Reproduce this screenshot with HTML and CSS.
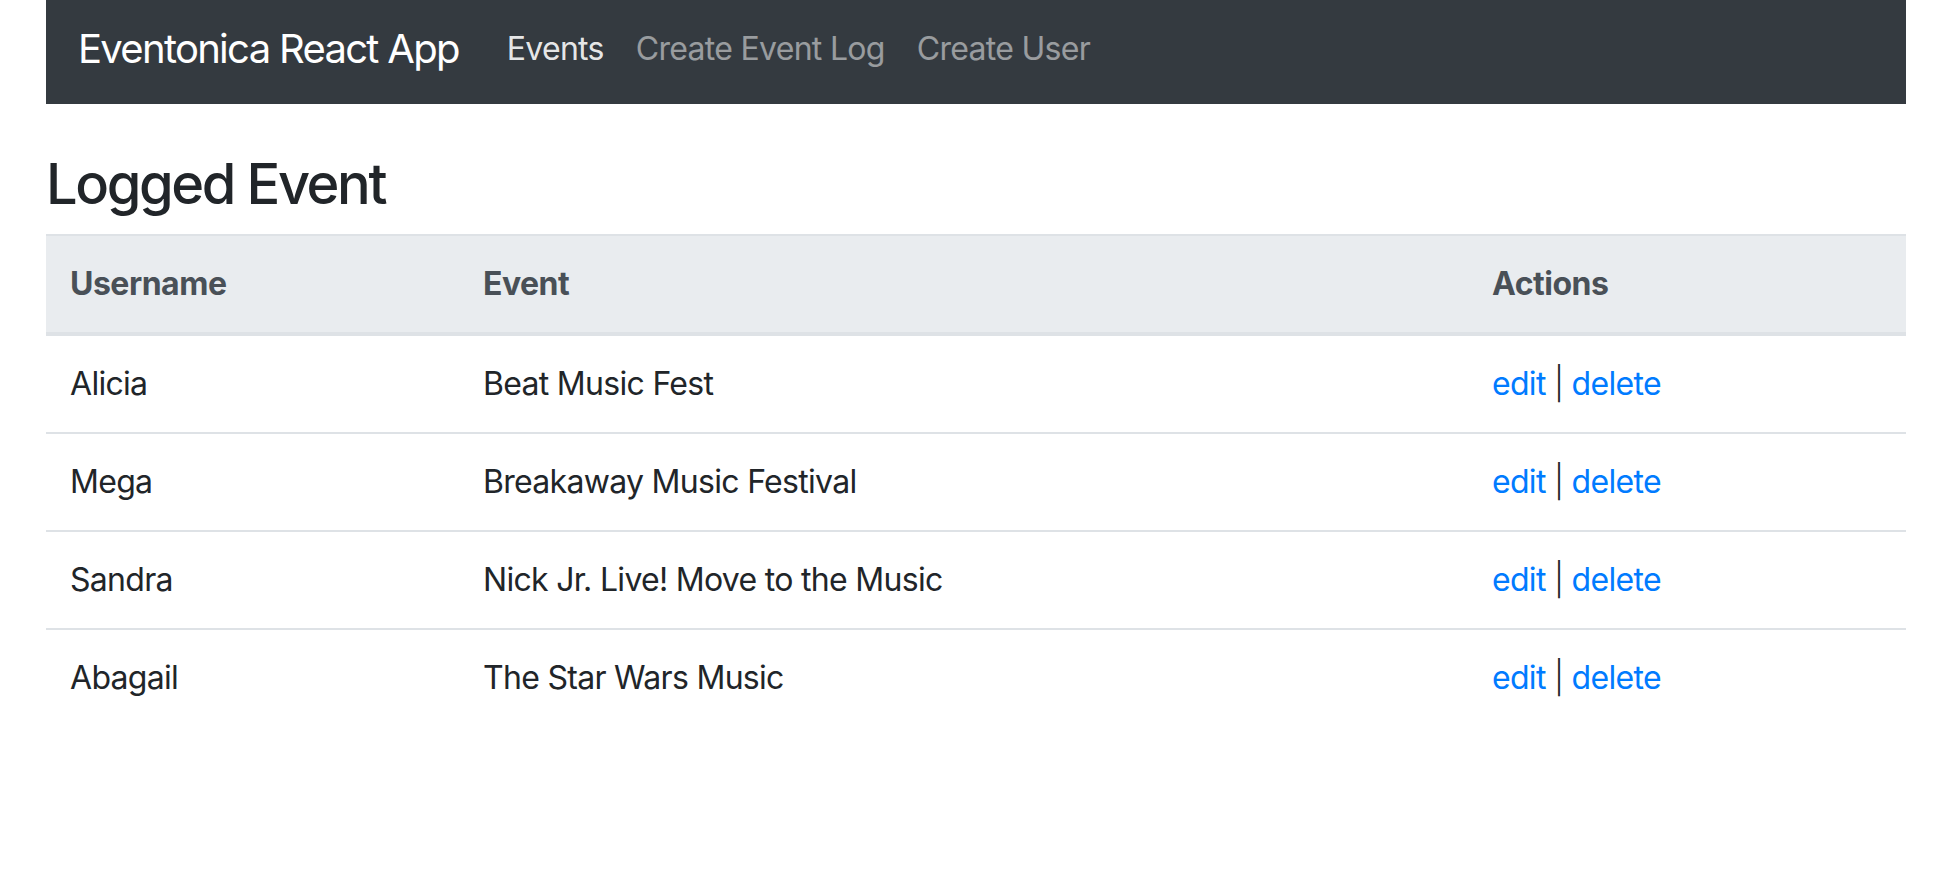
FILE: index.html
```html
<!DOCTYPE html>
<html>
<head>
<meta charset="utf-8">
<link rel="stylesheet" href="styles.css">
</head>
<body>
<div class="page">
  <nav class="navbar">
    <a class="brand">Eventonica React App</a>
    <ul class="nav">
      <li><a class="nav-link active">Events</a></li>
      <li><a class="nav-link">Create Event Log</a></li>
      <li><a class="nav-link">Create User</a></li>
    </ul>
  </nav>
  <h3 class="title">Logged Event</h3>
  <table class="table">
    <thead>
      <tr><th class="c1">Username</th><th class="c2">Event</th><th class="c3">Actions</th></tr>
    </thead>
    <tbody>
      <tr><td>Alicia</td><td>Beat Music Fest</td><td><a class="link">edit</a> <span class="sep">|</span> <a class="link">delete</a></td></tr>
      <tr><td>Mega</td><td>Breakaway Music Festival</td><td><a class="link">edit</a> <span class="sep">|</span> <a class="link">delete</a></td></tr>
      <tr><td>Sandra</td><td>Nick Jr. Live! Move to the Music</td><td><a class="link">edit</a> <span class="sep">|</span> <a class="link">delete</a></td></tr>
      <tr><td>Abagail</td><td>The Star Wars Music</td><td><a class="link">edit</a> <span class="sep">|</span> <a class="link">delete</a></td></tr>
    </tbody>
  </table>
</div>
</body>
</html>
```
FILE: styles.css
```css
html, body { margin: 0; padding: 0; background: #fff; }
body {
  font-family: Inter, "Noto Sans", "Liberation Sans", sans-serif;
  color: #212529;
  font-size: 32px;
  line-height: 1.5;
}
.page { margin: 0 50px 0 46px; }
.navbar {
  display: flex;
  align-items: center;
  height: 104px;
  padding: 0 32px 6px;
  background: #343a40;
  box-sizing: border-box;
}
.brand {
  font-size: 40px;
  color: #fff;
  margin-right: 32px;
  line-height: 1;
  letter-spacing: -1.7px;
}
.nav { display: flex; list-style: none; margin: 0; padding: 0; }
.nav-link {
  display: block;
  padding: 0 16px;
  color: rgba(255,255,255,.5);
  letter-spacing: -0.7px;
}
.nav-link.active { color: rgba(255,255,255,.9); }
.title {
  font-size: 56px;
  font-weight: 500;
  line-height: 1.2;
  margin: 47px 0 16px;
  letter-spacing: -2.4px;
}
.table { width: 100%; border-collapse: collapse; }
.table th, .table td {
  padding: 24px;
  text-align: left;
  vertical-align: top;
  border-top: 2px solid #dee2e6;
  letter-spacing: -0.7px;
}
.table th {
  background: #e9ecef;
  color: #495057;
  font-weight: 700;
  border-bottom: 4px solid #dee2e6;
  letter-spacing: -0.5px;
}
.c1 { width: 365px; }
.c2 { width: 961px; }
.link { color: #007bff; }
.sep { font-weight: 300; }
```
